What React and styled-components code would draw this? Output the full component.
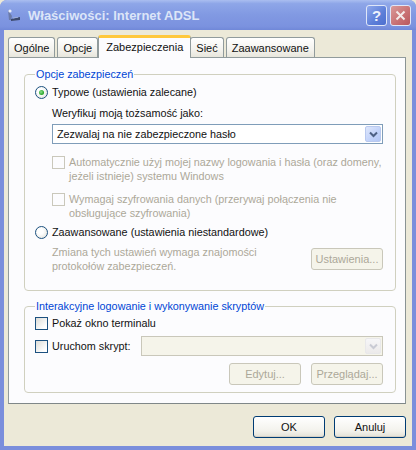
import React from 'react';
import styled, { createGlobalStyle, css } from 'styled-components';

const GlobalStyle = createGlobalStyle`
  html, body { margin: 0; padding: 0; background: #ece9d8; }
  * { box-sizing: border-box; }
`;

const tabs = ['Ogólne', 'Opcje', 'Zabezpieczenia', 'Sieć', 'Zaawansowane'];

function App() {
  return (
    <Window>
      <GlobalStyle />
      <TitleBar>
        <TitleIcon width="16" height="16" viewBox="0 0 16 16">
          <path d="M2 3 L6 9 L5 13 L3 13 Z" fill="#6b7ba8" />
          <path d="M5 12 L14 10 L14 13 L5 14 Z" fill="#3d4a6e" />
          <circle cx="4" cy="4" r="1.6" fill="#e9eef8" />
          <path d="M7 11 L12 10.2" stroke="#9fb0d8" strokeWidth="1" />
        </TitleIcon>
        <TitleText>Właściwości: Internet ADSL</TitleText>
        <CaptionButton>?</CaptionButton>
        <CaptionButton close>
          <svg width="11" height="11" viewBox="0 0 11 11">
            <path d="M1.5 1.5 L9.5 9.5 M9.5 1.5 L1.5 9.5" stroke="#f4eaea" strokeWidth="2" />
          </svg>
        </CaptionButton>
      </TitleBar>
      <Frame>
        <TabStrip>
          {tabs.map(t => (
            <Tab key={t} active={t === 'Zabezpieczenia'}>{t}</Tab>
          ))}
        </TabStrip>
        <Panel>
          <Group>
            <Legend>Opcje zabezpieczeń</Legend>
            <RadioRow>
              <Radio checked />
              <span>Typowe (ustawienia zalecane)</span>
            </RadioRow>
            <Indent>
              <Label>Weryfikuj moją tożsamość jako:</Label>
              <Combo>
                <ComboText>Zezwalaj na nie zabezpieczone hasło</ComboText>
                <ComboArrow />
              </Combo>
              <CheckRow disabled style={{ marginTop: 11 }}>
                <CheckBox disabled />
                <span>Automatycznie użyj mojej nazwy logowania i hasła (oraz domeny,<br />jeżeli istnieje) systemu Windows</span>
              </CheckRow>
              <CheckRow disabled style={{ marginTop: 9 }}>
                <CheckBox disabled />
                <span>Wymagaj szyfrowania danych (przerywaj połączenia nie<br />obsługujące szyfrowania)</span>
              </CheckRow>
            </Indent>
            <RadioRow style={{ marginTop: 4 }}>
              <Radio />
              <span>Zaawansowane (ustawienia niestandardowe)</span>
            </RadioRow>
            <Indent>
              <AdvancedRow>
                <Muted>Zmiana tych ustawień wymaga znajomości<br />protokołów zabezpieczeń.</Muted>
                <Button disabled>Ustawienia...</Button>
              </AdvancedRow>
            </Indent>
          </Group>
          <Group second>
            <Legend>Interakcyjne logowanie i wykonywanie skryptów</Legend>
            <CheckRow style={{ marginTop: 3 }}>
              <CheckBox />
              <span>Pokaż okno terminalu</span>
            </CheckRow>
            <ScriptRow>
              <CheckRow>
                <CheckBox />
                <span>Uruchom skrypt:</span>
              </CheckRow>
              <Combo disabled wide>
                <ComboText />
                <ComboArrow disabled />
              </Combo>
            </ScriptRow>
            <ButtonRow>
              <Button disabled>Edytuj...</Button>
              <Button disabled>Przeglądaj...</Button>
            </ButtonRow>
          </Group>
        </Panel>
        <Footer>
          <Button>OK</Button>
          <Button>Anuluj</Button>
        </Footer>
      </Frame>
    </Window>
  );
}

function ComboArrow({ disabled }) {
  return (
    <ArrowBox disabled={disabled}>
      <svg width="9" height="7" viewBox="0 0 9 7">
        <path d="M1 1.5 L4.5 5 L8 1.5" fill="none" stroke={disabled ? '#c9cbd4' : '#4d6185'} strokeWidth="2" />
      </svg>
    </ArrowBox>
  );
}

export default App;

const Window = styled.div`
  width: 416px;
  height: 450px;
  display: flex;
  flex-direction: column;
  font-family: "Liberation Sans", Tahoma, Arial, sans-serif;
  font-size: 10.8px;
  color: #111;
  background: #7a8edc;
  border-radius: 7px 7px 0 0;
  overflow: hidden;
`;

const TitleBar = styled.div`
  height: 30px;
  flex-shrink: 0;
  display: flex;
  align-items: center;
  padding: 0 5px 0 6px;
  background: linear-gradient(#aabef0 0%, #8ea6e8 12%, #8199e2 50%, #7b92df 88%, #7088d8 100%);
`;

const TitleIcon = styled.svg`
  flex-shrink: 0;
  margin-right: 6px;
`;

const TitleText = styled.div`
  flex: 1;
  color: #dce5f8;
  font-weight: bold;
  font-size: 13px;
`;

const CaptionButton = styled.div`
  width: 21px;
  height: 21px;
  margin-left: 3px;
  border-radius: 3px;
  border: 1px solid #dfe6f8;
  display: flex;
  align-items: center;
  justify-content: center;
  color: #eef2fc;
  font-weight: bold;
  font-size: 15px;
  ${p => p.close
    ? css`background: linear-gradient(135deg, #d99a9a, #c86f72 60%, #b9585e);`
    : css`background: linear-gradient(135deg, #8fa8ec, #5c7ed8 60%, #4d6fcf);`}
`;

const Frame = styled.div`
  flex: 1;
  display: flex;
  flex-direction: column;
  background: #ece9d8;
  margin: 0 4px 4px 4px;
  padding: 5px 6px 0 4px;
`;

const TabStrip = styled.div`
  height: 22px;
  display: flex;
  align-items: flex-end;
  position: relative;
  z-index: 1;
`;

const Tab = styled.div`
  height: 20px;
  padding: 0 5px;
  margin-right: 2px;
  display: flex;
  align-items: center;
  font-size: 11px;
  border: 1px solid #919b9c;
  border-bottom: none;
  border-radius: 3px 3px 0 0;
  background: linear-gradient(#ffffff, #f4f3ee 60%, #e8e6dc);
  ${p => p.active && css`
    height: 23px;
    margin: 0 0 -1px -2px;
    padding: 0 7px 2px;
    background: #fcfcfe;
    border-top: 3px solid #ffc83c;
    & + div { margin-left: -1px; }
  `}
`;

const Panel = styled.div`
  height: 347px;
  border: 1px solid #919b9c;
  border-color: #919b9c #8a9394 #7f8788 #919b9c;
  background: #fcfcfe;
  padding: 10px 9px 0 15px;
`;

const Group = styled.fieldset`
  margin: 0;
  min-width: 0;
  border: 1px solid #d0d0bf;
  border-radius: 4px;
  padding: 0 12px 17px 10px;
  ${p => p.second && css`
    margin-top: 9px;
    padding-bottom: 7px;
  `}
`;

const Legend = styled.legend`
  color: #0046d5;
  padding: 0 1px;
  margin-left: 0;
  line-height: 13px;
`;

const RadioRow = styled.div`
  display: flex;
  align-items: center;
  gap: 4px;
  height: 16px;
  margin-top: 3px;
`;

const Radio = styled.span`
  width: 13px;
  height: 13px;
  border-radius: 50%;
  border: 1px solid #1c5180;
  background: radial-gradient(circle at 40% 40%, #ffffff 30%, #dcdcd4 100%);
  position: relative;
  flex-shrink: 0;
  ${p => p.checked && css`
    &::after {
      content: '';
      position: absolute;
      left: 3px;
      top: 3px;
      width: 5px;
      height: 5px;
      border-radius: 50%;
      background: radial-gradient(circle at 40% 40%, #8ee08e, #21a121 70%);
    }
  `}
`;

const Indent = styled.div`
  padding-left: 17px;
`;

const Label = styled.div`
  margin-top: 6px;
  line-height: 14px;
`;

const Combo = styled.div`
  height: 20px;
  margin-top: 4px;
  display: flex;
  align-items: center;
  border: 1px solid ${p => (p.disabled ? '#c9c7ba' : '#7f9db9')};
  background: ${p => (p.disabled ? '#f5f4ea' : '#ffffff')};
  padding: 1px;
  ${p => p.wide && css`
    flex: 1;
    margin-top: 0;
  `}
`;

const ComboText = styled.div`
  flex: 1;
  padding-left: 3px;
`;

const ArrowBox = styled.div`
  width: 16px;
  height: 16px;
  border-radius: 2px;
  display: flex;
  align-items: center;
  justify-content: center;
  border: 1px solid ${p => (p.disabled ? '#e8e8ea' : '#b9c9ef')};
  background: ${p => (p.disabled
    ? 'linear-gradient(#f6f6f8, #eceaea)'
    : 'linear-gradient(135deg, #dfe7fb, #c1d2fa 60%, #b4c8f6)')};
`;

const CheckRow = styled.div`
  display: flex;
  align-items: flex-start;
  gap: 4px;
  line-height: 14px;
  white-space: nowrap;
  color: ${p => (p.disabled ? '#aca899' : 'inherit')};
`;

const CheckBox = styled.span`
  width: 13px;
  height: 13px;
  flex-shrink: 0;
  margin-top: 1px;
  border: 1px solid ${p => (p.disabled ? '#cac8bb' : '#1c5180')};
  background: ${p => (p.disabled ? '#fcfcfe' : 'linear-gradient(135deg, #dcdcd7, #ffffff 80%)')};
`;

const AdvancedRow = styled.div`
  display: flex;
  align-items: center;
  justify-content: space-between;
  margin-top: 5px;
`;

const Muted = styled.div`
  color: #aca899;
  line-height: 14px;
`;

const Button = styled.div`
  width: 72px;
  height: 22px;
  display: flex;
  align-items: center;
  justify-content: center;
  border-radius: 3px;
  font-size: 11px;
  border: 1px solid ${p => (p.disabled ? '#c9c7ba' : '#003c74')};
  color: ${p => (p.disabled ? '#aca899' : 'inherit')};
  background: ${p => (p.disabled ? '#f5f4ea' : 'linear-gradient(#ffffff, #f3f2ec 70%, #e3e1d6)')};
  ${p => !p.disabled && css`box-shadow: inset 0 -1px 0 #d6d0c5;`}
`;

const ScriptRow = styled.div`
  display: flex;
  align-items: center;
  margin-top: 6px;
  gap: 10px;
`;

const ButtonRow = styled.div`
  display: flex;
  justify-content: flex-end;
  gap: 10px;
  margin-top: 7px;
`;

const Footer = styled.div`
  display: flex;
  justify-content: flex-end;
  gap: 9px;
  margin-top: 12px;
`;
